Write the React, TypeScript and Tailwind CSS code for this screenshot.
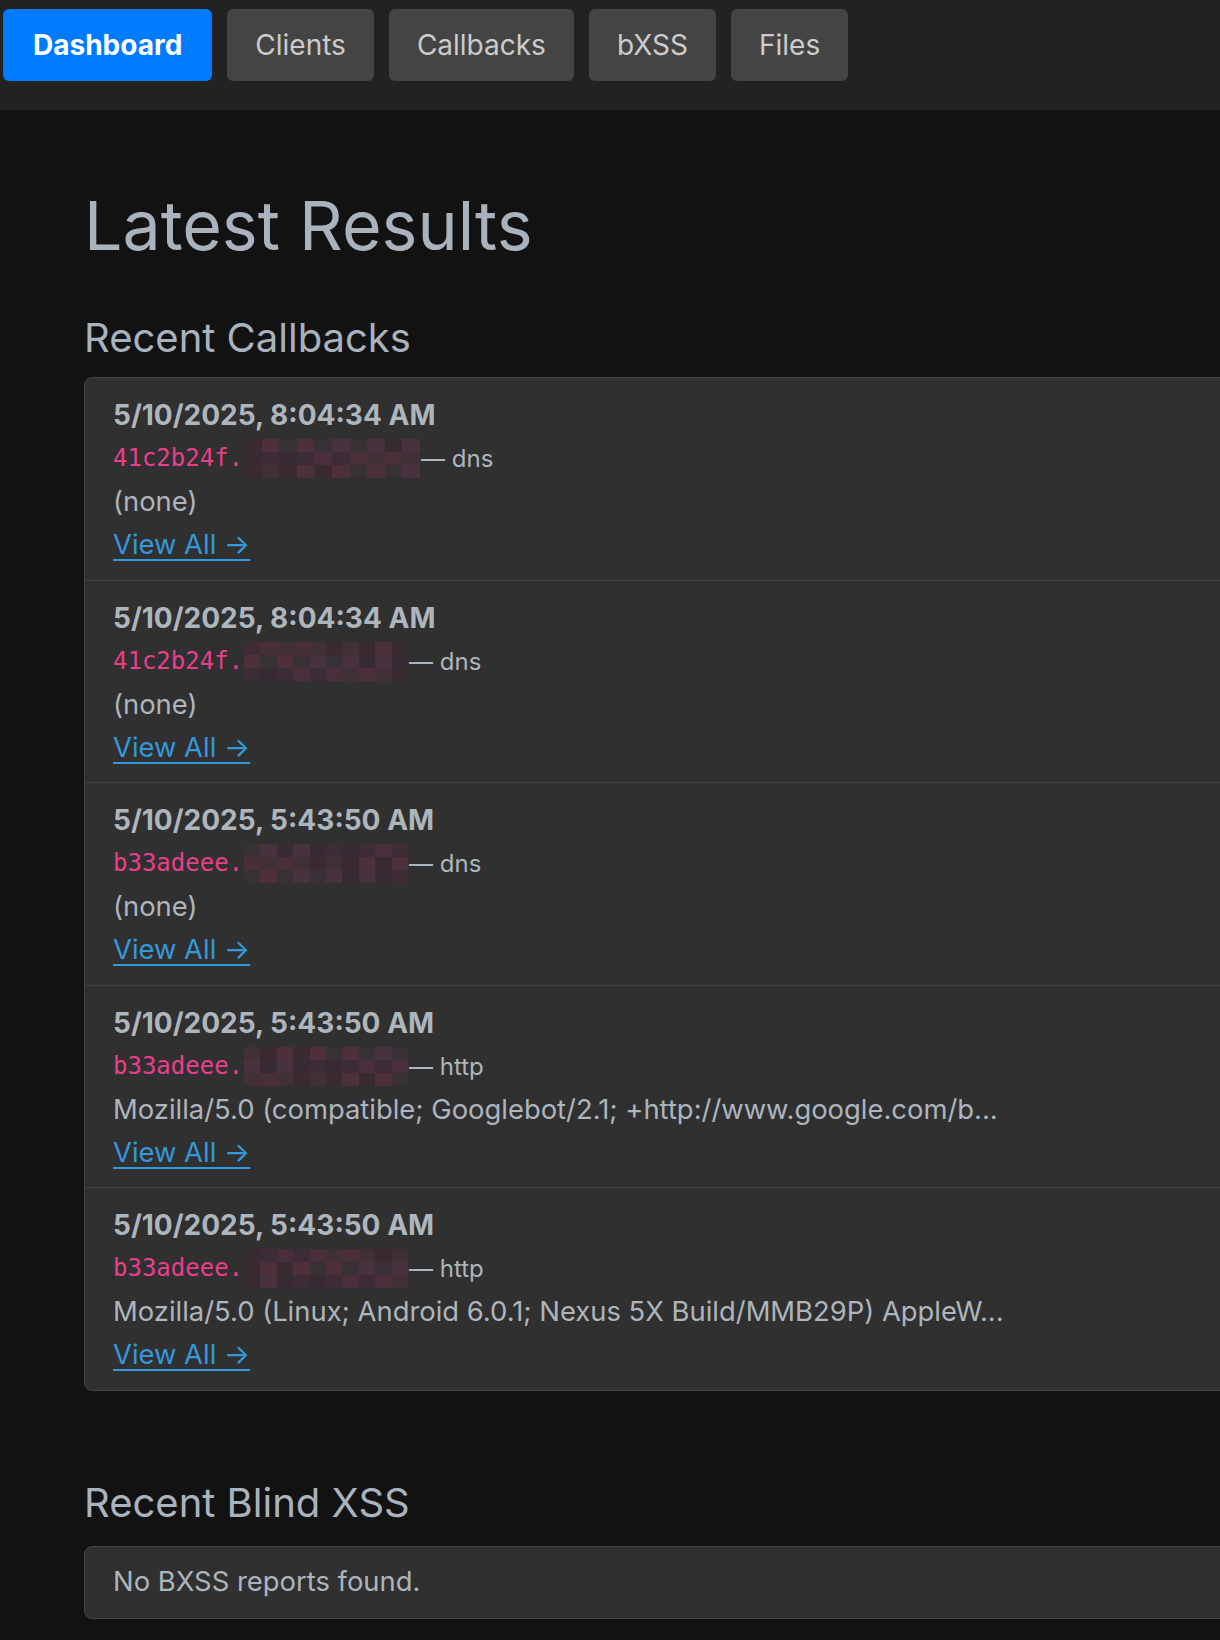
import React from 'react';

type Callback = {
  time: string;
  host: string;
  redactW: number;
  kind: string;
  detail: string;
};

const callbacks: Callback[] = [
  { time: '5/10/2025, 8:04:34 AM', host: '41c2b24f.', redactW: 176, kind: 'dns', detail: '(none)' },
  { time: '5/10/2025, 8:04:34 AM', host: '41c2b24f.', redactW: 164, kind: 'dns', detail: '(none)' },
  { time: '5/10/2025, 5:43:50 AM', host: 'b33adeee.', redactW: 164, kind: 'dns', detail: '(none)' },
  {
    time: '5/10/2025, 5:43:50 AM',
    host: 'b33adeee.',
    redactW: 164,
    kind: 'http',
    detail: 'Mozilla/5.0 (compatible; Googlebot/2.1; +http://www.google.com/b...',
  },
  {
    time: '5/10/2025, 5:43:50 AM',
    host: 'b33adeee.',
    redactW: 164,
    kind: 'http',
    detail: 'Mozilla/5.0 (Linux; Android 6.0.1; Nexus 5X Build/MMB29P) AppleW...',
  },
];

const tabs = ['Dashboard', 'Clients', 'Callbacks', 'bXSS', 'Files'];

// mosaic shades used for the blurred-out domain
const shades = ['#3b2a33', '#45303a', '#4d2f3d', '#3f2c36', '#362b31', '#4a3340', '#383236', '#52303f'];

function Redacted({ width, seed }: { width: number; seed: number }) {
  const cols = 10;
  const cells = [];
  for (let i = 0; i < cols * 3; i++) {
    const c = shades[(i * 5 + seed * 3 + (i % 3) * 2) % shades.length];
    cells.push(<span key={i} className="block h-[13px]" style={{ backgroundColor: c }} />);
  }
  return (
    <span
      className="mx-[1px] -my-2 inline-grid grid-cols-10 align-middle opacity-90"
      style={{ width }}
    >
      {cells}
    </span>
  );
}

function CallbackRow({ cb, idx }: { cb: Callback; idx: number }) {
  return (
    <div className="border-b border-[#444] px-[28px] pb-[13.5px] pt-[16px] leading-[43px] last:border-b-0">
      <div className="h-[43px] text-[28px] font-bold text-[#adb5bd]">{cb.time}</div>
      <div className="flex h-[43px] items-center">
        <span className="font-['DejaVu_Sans_Mono',monospace] text-[24px] text-[#e83e8c]">{cb.host}</span>
        <Redacted width={cb.redactW} seed={idx} />
        <span className="text-[24px] text-[#adb5bd]">— {cb.kind}</span>
      </div>
      <div className="h-[43px] text-[27.4px] text-[#adb5bd]">{cb.detail}</div>
      <div className="h-[43px] text-[27.4px]">
        <a href="#" className="text-[#3498db] underline underline-offset-[5px]">
          View All →
        </a>
      </div>
    </div>
  );
}

export default function App() {
  return (
    <div className="min-h-[1640px] w-[1220px] overflow-hidden bg-[#121212] font-['Inter',sans-serif]">
      <nav className="flex h-[110px] gap-[15px] bg-[#222] pl-[3px] pt-[9px]">
        {tabs.map((t, i) => (
          <button
            key={t}
            className={
              i === 0
                ? 'h-[72px] rounded-[6px] bg-[#007bff] px-[30px] text-[28px] font-bold text-white'
                : 'h-[72px] rounded-[6px] bg-[#444] px-[28px] text-[28px] text-[#ccc]'
            }
          >
            {t}
          </button>
        ))}
      </nav>

      <main className="w-[1300px] pl-[84px] pt-[74px]">
        <h1 className="text-[68px] leading-[82px] text-[#a9b3be]">Latest Results</h1>

        <h2 className="mt-[48px] text-[40px] leading-[48px] text-[#a9b3be]">Recent Callbacks</h2>
        <div className="mt-[15px] overflow-hidden rounded-[8px] border border-[#444] bg-[#303030]">
          {callbacks.map((cb, i) => (
            <CallbackRow key={i} cb={cb} idx={i} />
          ))}
        </div>

        <h2 className="mt-[88px] text-[40px] leading-[48px] text-[#a9b3be]">Recent Blind XSS</h2>
        <div className="mt-[19px] flex h-[73px] items-center rounded-[8px] border border-[#444] bg-[#303030] px-[28px]">
          <span className="text-[27.4px] text-[#adb5bd]">No BXSS reports found.</span>
        </div>
      </main>
    </div>
  );
}
